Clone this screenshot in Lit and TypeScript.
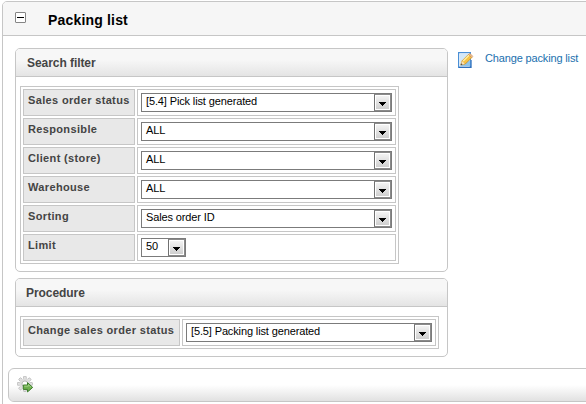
import { LitElement, html, css, svg } from "lit";
import { customElement, property } from "lit/decorators.js";

@customElement("select-box")
class SelectBox extends LitElement {
  @property() value = "";
  static styles = css`
    :host { display: block; box-sizing: border-box; height: 19px; border: 1px solid #7b7b7b; background: #fff; }
    .row { display: flex; height: 17px; }
    .text { flex: 1; padding-left: 4px; font: 11px/15px "Liberation Sans", Arial, sans-serif; letter-spacing: -.13px; color: #000; white-space: nowrap; }
    .button { box-sizing: border-box; width: 17px; height: 17px; border: 1px solid #707070; border-right-color: #8a8a8a; border-top-color: #8a8a8a; border-bottom-color: #8a8a8a; padding: 1px; background: #fff; }
    .face { height: 13px; background: linear-gradient(#f3f3f3, #cfcfcf); }
    svg { display: block; }
  `;
  render() {
    return html`<div class="row"><div class="text">${this.value}</div><div class="button"><div class="face">
      <svg width="13" height="13" shape-rendering="crispEdges"><path d="M3 6h7v1h-1v1h-1v1h-1v1h-1v-1h-1v-1h-1v-1h-1z" fill="#000"/></svg>
    </div></div></div>`;
  }
}

const pencil = svg`
  <path d="M.6.6h11.800v14.800H.6z" fill="#fff" stroke="#4a8fd6" stroke-width="1.200"/>
  <path d="M13 8v7.400H1" fill="none" stroke="#2f6fba" stroke-width="1.300"/>
  <rect x="2" y="2" width="10" height="12" fill="#d4e8f8"/>
  <path d="M2 14L12.200 8v6z" fill="#8cc4ec"/>
  <path d="M2.800 13l1.300-4.200L10.700 2.200l3.200 3.200L7.300 12z" fill="#f6c244" stroke="#c98c24" stroke-width=".8"/>
  <path d="M5.200 9l6-6" stroke="#fff0a5" stroke-width="1.400"/>
  <path d="M2.800 13l1.200-3.900 2.900 2.800z" fill="#f6dfb8"/><path d="M2.600 13.200l.6-2 1.400 1.400z" fill="#444"/>
  <path d="M10.500 2.500l1.300-1.300 3.100 3.100-1.300 1.300z" fill="#eab98c" stroke="#c98c54" stroke-width=".5"/>`;

const teeth = [0, 45, 90, 135, 180, 225, 270, 315];
const gear = svg`
  ${teeth.map((a) => svg`<rect x="6.500" y=".3" width="2.800" height="4" rx=".6" fill="#e2e2e2" stroke="#a8a8a8" stroke-width=".6" transform="rotate(${a} 7.900 7.900)"/>`)}
  <circle cx="7.900" cy="7.900" r="4.300" fill="#fff" stroke="#dcdcdc" stroke-width="2.600"/>
  <circle cx="7.900" cy="7.900" r="2.900" fill="#fff" stroke="#a0a0a0" stroke-width=".7"/>
  <path d="M6.300 9h4.200V6.600l5.200 4.800-5.200 4.500v-2.500H6.300z" fill="#6fb04f" stroke="#3c7d2b" stroke-width="1"/>
  <path d="M7.200 10.200h4.200V8.700l2.600 2.500" fill="none" stroke="#a9d68f" stroke-width=".8"/>`;

const filters = [
  ["Sales order status", "[5.4] Pick list generated"],
  ["Responsible", "ALL"],
  ["Client (store)", "ALL"],
  ["Warehouse", "ALL"],
  ["Sorting", "Sales order ID"],
  ["Limit", "50"],
];

@customElement("app-root")
class AppRoot extends LitElement {
  static styles = css`
    :host { display: block; width: 586px; height: 404px; overflow: hidden; background: #fff; font-family: "Liberation Sans", Arial, sans-serif; }
    * { box-sizing: border-box; }
    .panel { margin: 1px 0 0 2px; height: 420px; width: 600px; border: 1px solid #c6c6c6; border-radius: 5px 0 0 0; }
    .head { height: 34px; display: flex; background: #f6f6f6; border-bottom: 1px solid #c6c6c6; border-radius: 4px 0 0 0; }
    .toggle { width: 11px; height: 11px; margin: 10px 0 0 12px; border: 1px solid #858585; border-radius: 1px; background: #fff; padding: 4px 1px; }
    .toggle i { display: block; height: 1px; background: #000; }
    .title { margin: 0 0 0 22px; font: bold 14px/36px "Liberation Sans", Arial, sans-serif; letter-spacing: .18px; color: #000; }
    .body { display: flex; padding: 12px 0 0 12px; }
    .left { width: 433px; }
    .box { border: 1px solid #c6c6c6; border-radius: 5px; }
    .search { height: 224px; margin-bottom: 6px; }
    .procedure { height: 79px; }
    .cap { height: 28px; padding-left: 11px; border-bottom: 1px solid #c6c6c6; border-radius: 4px 4px 0 0; background: linear-gradient(#f7f7f7 40%, #e4e4e4); font: bold 12px/29px "Liberation Sans", Arial, sans-serif; letter-spacing: -.06px; color: #444; }
    .procedure .cap { padding-left: 10px; }
    .grid { display: grid; grid-template-columns: 112px 259px; gap: 2px; width: 379px; margin: 9px 0 0 4px; padding: 2px; border: 1px solid #c6c6c6; }
    .procedure .grid { grid-template-columns: 157px 254px; width: 419px; }
    .label { height: 27px; padding-left: 4px; border: 1px solid #c6c6c6; background: #e8e8e8; font: bold 11px/20px "Liberation Sans", Arial, sans-serif; letter-spacing: .35px; color: #444; white-space: nowrap; }
    .value { height: 27px; padding: 3px; border: 1px solid #c6c6c6; }
    .short { width: 45px; }
    .link { display: flex; margin-left: 10px; font-size: 11px; letter-spacing: -.15px; color: #1a6fae; white-space: nowrap; }
    .link svg { display: block; margin-top: 4px; }
    .link span { margin-left: 11px; line-height: 21px; }
    .bar { width: 610px; height: 34px; margin: 11px 0 0 5px; padding: 7px 0 0 8px; border: 1px solid #c6c6c6; border-radius: 6px; background: linear-gradient(#fff 50%, #e1e1e1); background-clip: padding-box; }
    .bar svg { display: block; }
  `;
  render() {
    return html`<div class="panel">
      <div class="head"><div class="toggle"><i></i></div><div class="title">Packing list</div></div>
      <div class="body">
        <div class="left">
          <div class="box search"><div class="cap">Search filter</div>
            <div class="grid">${filters.map(([l, v]) => html`<div class="label">${l}</div><div class="value"><select-box class=${l === "Limit" ? "short" : ""} .value=${v}></select-box></div>`)}</div>
          </div>
          <div class="box procedure"><div class="cap">Procedure</div>
            <div class="grid"><div class="label">Change sales order status</div><div class="value"><select-box .value=${"[5.5] Packing list generated"}></select-box></div></div>
          </div>
        </div>
        <div class="link"><svg width="16" height="16">${pencil}</svg><span>Change packing list</span></div>
      </div>
      <div class="bar"><svg width="17" height="17">${gear}</svg></div>
    </div>`;
  }
}
